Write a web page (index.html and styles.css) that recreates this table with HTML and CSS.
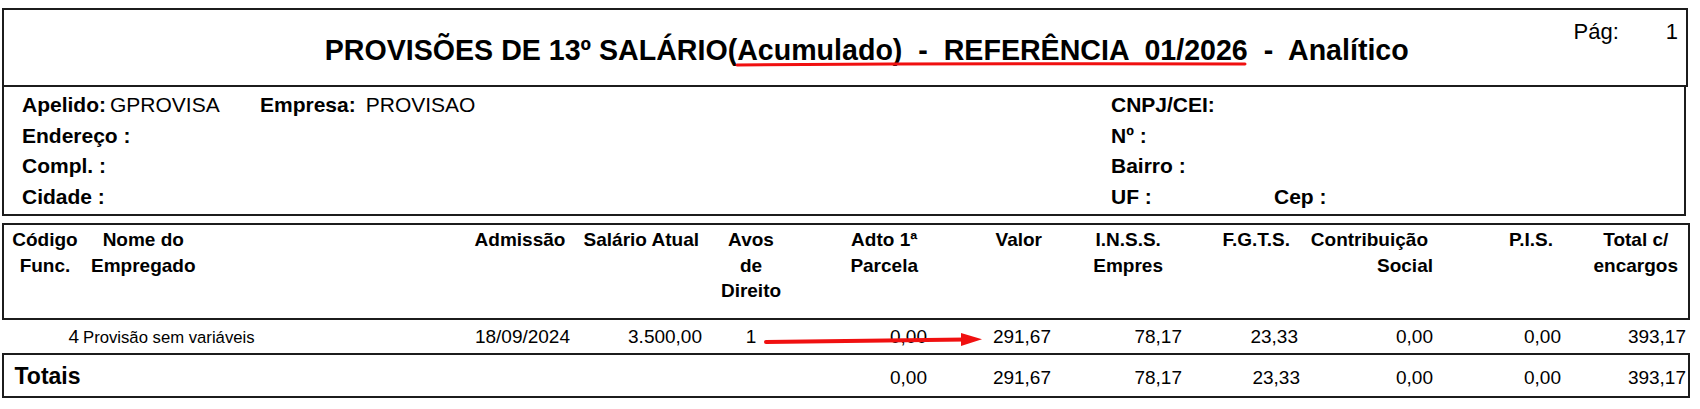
FILE: index.html
```html
<!DOCTYPE html>
<html lang="pt-BR">
<head>
<meta charset="utf-8">
<title>Provisões de 13º Salário</title>
<link rel="stylesheet" href="styles.css">
</head>
<body>
<div class="page">
  <div class="box head">
    <h1 class="title">PROVISÕES DE 13º SALÁRIO(Acumulado)  -  REFERÊNCIA  01/2026  -  Analítico</h1>
    <div class="pag"><span>Pág:</span><span>1</span></div>
  </div>

  <div class="box info">
    <div><span class="lbl">Apelido:</span><span class="v1">GPROVISA</span></div>
    <div><span class="lbl">Empresa:</span><span class="v2">PROVISAO</span></div>
    <div class="lbl">CNPJ/CEI:</div>
    <div></div>

    <div class="lbl">Endereço :</div>
    <div></div>
    <div class="lbl">Nº :</div>
    <div></div>

    <div class="lbl">Compl. :</div>
    <div></div>
    <div class="lbl">Bairro :</div>
    <div></div>

    <div class="lbl">Cidade :</div>
    <div></div>
    <div class="lbl">UF :</div>
    <div class="lbl">Cep :</div>
  </div>

  <div class="box thead cols">
    <div class="c-center">Código<br>Func.</div>
    <div class="c-nome"><span class="stack">Nome do<br>Empregado</span></div>
    <div class="c-center">Admissão</div>
    <div class="c-right pr7">Salário Atual</div>
    <div class="c-center">Avos<br>de<br>Direito</div>
    <div class="c-right pr18"><span class="stack">Adto 1ª<br>Parcela</span></div>
    <div class="c-right pr16">Valor</div>
    <div class="c-right pr27"><span class="stack">I.N.S.S.<br>Empres</span></div>
    <div class="c-right pr12">F.G.T.S.</div>
    <div class="c-right pr7">Contribuição<span class="sp"></span><br>Social</div>
    <div class="c-right pr13">P.I.S.</div>
    <div class="c-right pr10"><span class="stack">Total c/<br>encargos</span></div>
  </div>

  <div class="drow cols">
    <div class="c-right pr7">4</div>
    <div class="nome">Provisão sem variáveis</div>
    <div class="c-right pr2">18/09/2024</div>
    <div class="c-right pr4">3.500,00</div>
    <div class="c-center">1</div>
    <div class="c-right pr9">0,00</div>
    <div class="c-right pr7">291,67</div>
    <div class="c-right pr8">78,17</div>
    <div class="c-right pr4">23,33</div>
    <div class="c-right pr7">0,00</div>
    <div class="c-right pr5">0,00</div>
    <div class="c-right pr2">393,17</div>
  </div>

  <div class="box tot cols">
    <div class="tot-lbl">Totais</div>
    <div></div>
    <div></div>
    <div></div>
    <div class="c-right pr9">0,00</div>
    <div class="c-right pr7">291,67</div>
    <div class="c-right pr8">78,17</div>
    <div class="c-right pr2">23,33</div>
    <div class="c-right pr7">0,00</div>
    <div class="c-right pr5">0,00</div>
    <div class="c-right pr2">393,17</div>
  </div>

  <svg class="marks" width="1700" height="409" viewBox="0 0 1700 409" aria-hidden="true">
    <path d="M737 65 Q 990 63.2 1245 64" fill="none" stroke="#f01010" stroke-width="3" stroke-linecap="round"/>
    <path d="M766 342 L 966 339.5" fill="none" stroke="#f01010" stroke-width="4" stroke-linecap="round"/>
    <polygon points="961,333 982,339.3 961,346" fill="#f01010"/>
  </svg>
</div>
</body>
</html>
```

FILE: styles.css
```css
* { box-sizing: border-box; }
html, body { margin: 0; padding: 0; background: #fff; }
body { font-family: "Liberation Sans", Arial, sans-serif; color: #000; }

.page {
  position: relative;
  width: 1700px;
  height: 409px;
  padding: 8px 0 0 2px;
  overflow: hidden;
}

.box { border: 2px solid #1c1c1c; }

/* Report header */
.head {
  width: 1686px;
  height: 79px;
  display: grid;
  grid-template-columns: 1fr auto;
}
.title {
  margin: 0;
  font-size: 28.6px;
  font-weight: 700;
  line-height: 32px;
  white-space: pre;
  text-align: center;
  padding: 5px 0 0 156px;
  align-self: center;
}
.pag {
  display: flex;
  gap: 47px;
  font-size: 22px;
  line-height: 26px;
  padding: 9px 8px 0 0;
}

/* Company info */
.info {
  width: 1684px;
  height: 129px;
  border-top: none;
  padding: 3px 0 0 18px;
  display: grid;
  grid-template-columns: 238px 851px 163px 1fr;
  grid-auto-rows: 30.5px;
  font-size: 21px;
  line-height: 30.5px;
}
.lbl { font-weight: 700; }
.v1 { margin-left: 4px; }
.v2 { margin-left: 10px; }

/* Table */
.cols {
  display: grid;
  grid-template-columns: 82px 382px 104px 134px 90px 140px 122px 132px 112px 138px 126px 122px;
}
.thead {
  width: 1688px;
  height: 97px;
  margin-top: 7px;
  padding-top: 2px;
  font-size: 19px;
  font-weight: 700;
  line-height: 25.5px;
}
.stack { display: inline-block; text-align: center; }
.sp { display: inline-block; width: 5px; }
.c-center { text-align: center; }
.c-right { text-align: right; }
.c-nome { padding-left: 5px; }

.pr2 { padding-right: 2px; }
.pr4 { padding-right: 4px; }
.pr5 { padding-right: 5px; }
.pr7 { padding-right: 7px; }
.pr8 { padding-right: 8px; }
.pr9 { padding-right: 9px; }
.pr10 { padding-right: 10px; }
.pr12 { padding-right: 12px; }
.pr13 { padding-right: 13px; }
.pr16 { padding-right: 16px; }
.pr18 { padding-right: 18px; }
.pr27 { padding-right: 27px; }

.drow {
  width: 1688px;
  height: 33px;
  border-left: 2px solid transparent;
  border-right: 2px solid transparent;
  align-items: baseline;
  font-size: 19px;
  line-height: 34px;
}
.nome {
  font-size: 16.7px;
  margin-left: -3px;
}

.tot {
  width: 1688px;
  height: 45px;
  font-size: 19px;
  line-height: 42px;
  align-items: baseline;
}
.tot-lbl {
  grid-column: 1 / 3;
  font-size: 23px;
  font-weight: 700;
  padding-left: 10.5px;
}

.marks {
  position: absolute;
  left: 0;
  top: 0;
  pointer-events: none;
}
```
